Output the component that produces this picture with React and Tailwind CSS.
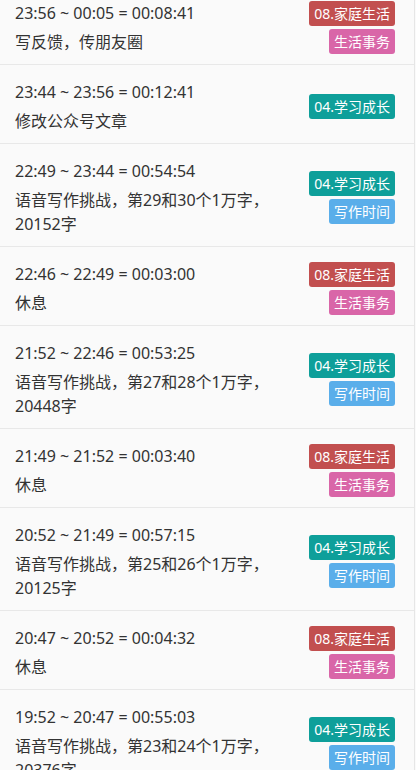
const TAGS = {
  family: { label: "08.家庭生活", cls: "bg-[#c24f4f]" },
  life: { label: "生活事务", cls: "bg-[#d966a8]" },
  study: { label: "04.学习成长", cls: "bg-[#0e9f9a]" },
  write: { label: "写作时间", cls: "bg-[#5aaeea]" },
}

const records = [
  { time: "23:56 ~ 00:05 = 00:08:41", note: "写反馈，传朋友圈", tags: ["family", "life"] },
  { time: "23:44 ~ 23:56 = 00:12:41", note: "修改公众号文章", tags: ["study"] },
  { time: "22:49 ~ 23:44 = 00:54:54", note: "语音写作挑战，第29和30个1万字，20152字", tags: ["study", "write"] },
  { time: "22:46 ~ 22:49 = 00:03:00", note: "休息", tags: ["family", "life"] },
  { time: "21:52 ~ 22:46 = 00:53:25", note: "语音写作挑战，第27和28个1万字，20448字", tags: ["study", "write"] },
  { time: "21:49 ~ 21:52 = 00:03:40", note: "休息", tags: ["family", "life"] },
  { time: "20:52 ~ 21:49 = 00:57:15", note: "语音写作挑战，第25和26个1万字，20125字", tags: ["study", "write"] },
  { time: "20:47 ~ 20:52 = 00:04:32", note: "休息", tags: ["family", "life"] },
  { time: "19:52 ~ 20:47 = 00:55:03", note: "语音写作挑战，第23和24个1万字，20376字", tags: ["study", "write"] },
]

const Tag = ({ kind }) => {
  const t = TAGS[kind]
  return (
    <span className={`${t.cls} rounded-[3px] px-[5px] text-[14px] leading-[25px] text-white whitespace-nowrap`}>
      {t.label}
    </span>
  )
}

const RecordRow = ({ time, note, tags }) => (
  <div className="flex items-center justify-between gap-3 border-b border-[#e8e8e8] pl-[15px] pr-[19px] pt-[15px] pb-[10px]">
    <div className="flex-1 text-[16px] leading-[24px] text-[#333333]">
      <div>{time}</div>
      <div className="mt-[5px]">{note}</div>
    </div>
    <div className="flex flex-col items-end gap-[3px]">
      {tags.map((k) => (
        <Tag key={k} kind={k} />
      ))}
    </div>
  </div>
)

export default function App() {
  return (
    <div
      className="h-[770px] w-[416px] overflow-hidden bg-[#fafafa]"
      style={{ fontFamily: '"Noto Sans", "Noto Sans CJK SC", sans-serif' }}
    >
      <div className="-mt-[14px] w-[415px] border-r border-[#e6e6e6]">
        {records.map((r) => (
          <RecordRow key={r.time} {...r} />
        ))}
      </div>
    </div>
  )
}
